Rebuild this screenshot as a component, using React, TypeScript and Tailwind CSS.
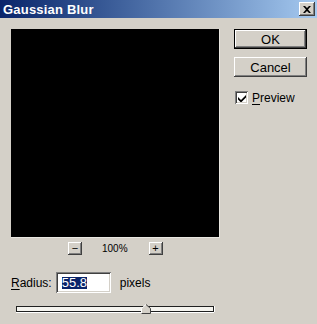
const raised =
  "shadow-[inset_-1px_-1px_0_#404040,inset_1px_1px_0_#ffffff,inset_-2px_-2px_0_#808080]";
const sunken =
  "shadow-[inset_1px_1px_0_#808080,inset_-1px_-1px_0_#ffffff,inset_2px_2px_0_#404040,inset_-2px_-2px_0_#d4d0c8]";

function SmallButton({ label }: { label: string }) {
  return (
    <div
      className={`w-[14px] h-[13px] bg-[#d4d0c8] ${raised} flex items-center justify-center text-[11px] leading-none`}
    >
      {label}
    </div>
  );
}

export default function App() {
  return (
    <div
      className="w-[317px] h-[324px] bg-[#d4d0c8] flex flex-col text-black"
      style={{ fontFamily: '"Liberation Sans", Arial, sans-serif' }}
    >
      {/* title bar */}
      <div className="h-[18px] flex items-center justify-between pl-[3px] pr-[2px] bg-gradient-to-r from-[#0a246a] to-[#a6caf0]">
        <span className="text-white font-bold text-[13px] leading-none tracking-[0.2px]">
          Gaussian Blur
        </span>
        <div
          className={`w-[16px] h-[14px] bg-[#d4d0c8] ${raised} flex items-center justify-center`}
        >
          <svg width="8" height="7" viewBox="0 0 8 7">
            <path d="M0 0h2l2 2 2-2h2L5 3.5 8 7H6L4 5 2 7H0l3-3.5z" fill="#000" />
          </svg>
        </div>
      </div>

      <div className="flex pt-[11px] pl-[11px]">
        {/* left column */}
        <div className="w-[209px] flex flex-col">
          <div className="w-[209px] h-[209px] bg-black border-r border-b border-[#e8e6e0]" />

          <div className="mt-[4px] h-[13px] flex items-center">
            <div className="ml-[57px]">
              <SmallButton label="−" />
            </div>
            <span className="ml-[20px] text-[10px] leading-none">100%</span>
            <div className="ml-[21px]">
              <SmallButton label="+" />
            </div>
          </div>

          <div className="mt-[17px] h-[21px] flex items-center">
            <span className="text-[12px] leading-none">
              <span className="underline underline-offset-[2px]">R</span>adius:
            </span>
            <div
              className={`ml-[4px] w-[55px] h-[21px] bg-white ${sunken} flex items-center pl-[6px]`}
            >
              <span className="bg-[#0a246a] text-white text-[13px] leading-[12px] h-[12px]">
                55.8
              </span>
            </div>
            <span className="ml-[9px] text-[12px] leading-none">pixels</span>
          </div>

          <div className="mt-[11px] relative w-[198px] ml-[5px] h-[10px] flex items-center">
            <div className="w-full h-[6px] bg-[#f4f3ee] border border-[#202020] shadow-[0_1px_0_#ffffff,1px_0_0_#ffffff]" />
            <svg
              className="absolute left-[125px] top-0"
              width="10"
              height="10"
              viewBox="0 0 10 10"
            >
              <path d="M0.5 9.5V4.5L5 0.5L9.5 4.5V9.5Z" fill="#d4d0c8" />
              <path d="M0.5 9.5V4.5L5 0.5" stroke="#fff" fill="none" />
              <path d="M5 0.5L9.5 4.5V9.5H0.5" stroke="#404040" fill="none" />
            </svg>
          </div>
        </div>

        {/* right column */}
        <div className="ml-[14px] flex flex-col">
          <div className="w-[73px] h-[20px] border border-black">
            <div
              className={`w-full h-full ${raised} flex items-center justify-center text-[13px] leading-none`}
            >
              OK
            </div>
          </div>
          <div
            className={`mt-[8px] w-[73px] h-[20px] ${raised} flex items-center justify-center text-[13px] leading-none`}
          >
            Cancel
          </div>
          <div className="mt-[14px] flex items-center ml-[1px]">
            <div className={`w-[13px] h-[13px] bg-white ${sunken} flex items-center justify-center`}>
              <svg width="8" height="8" viewBox="0 0 8 8">
                <path d="M0 3l3 3 5-5v2.5l-5 5-3-3z" fill="#000" />
              </svg>
            </div>
            <span className="ml-[4px] text-[12px] leading-none">
              <span className="underline underline-offset-[2px]">P</span>review
            </span>
          </div>
        </div>
      </div>
    </div>
  );
}
